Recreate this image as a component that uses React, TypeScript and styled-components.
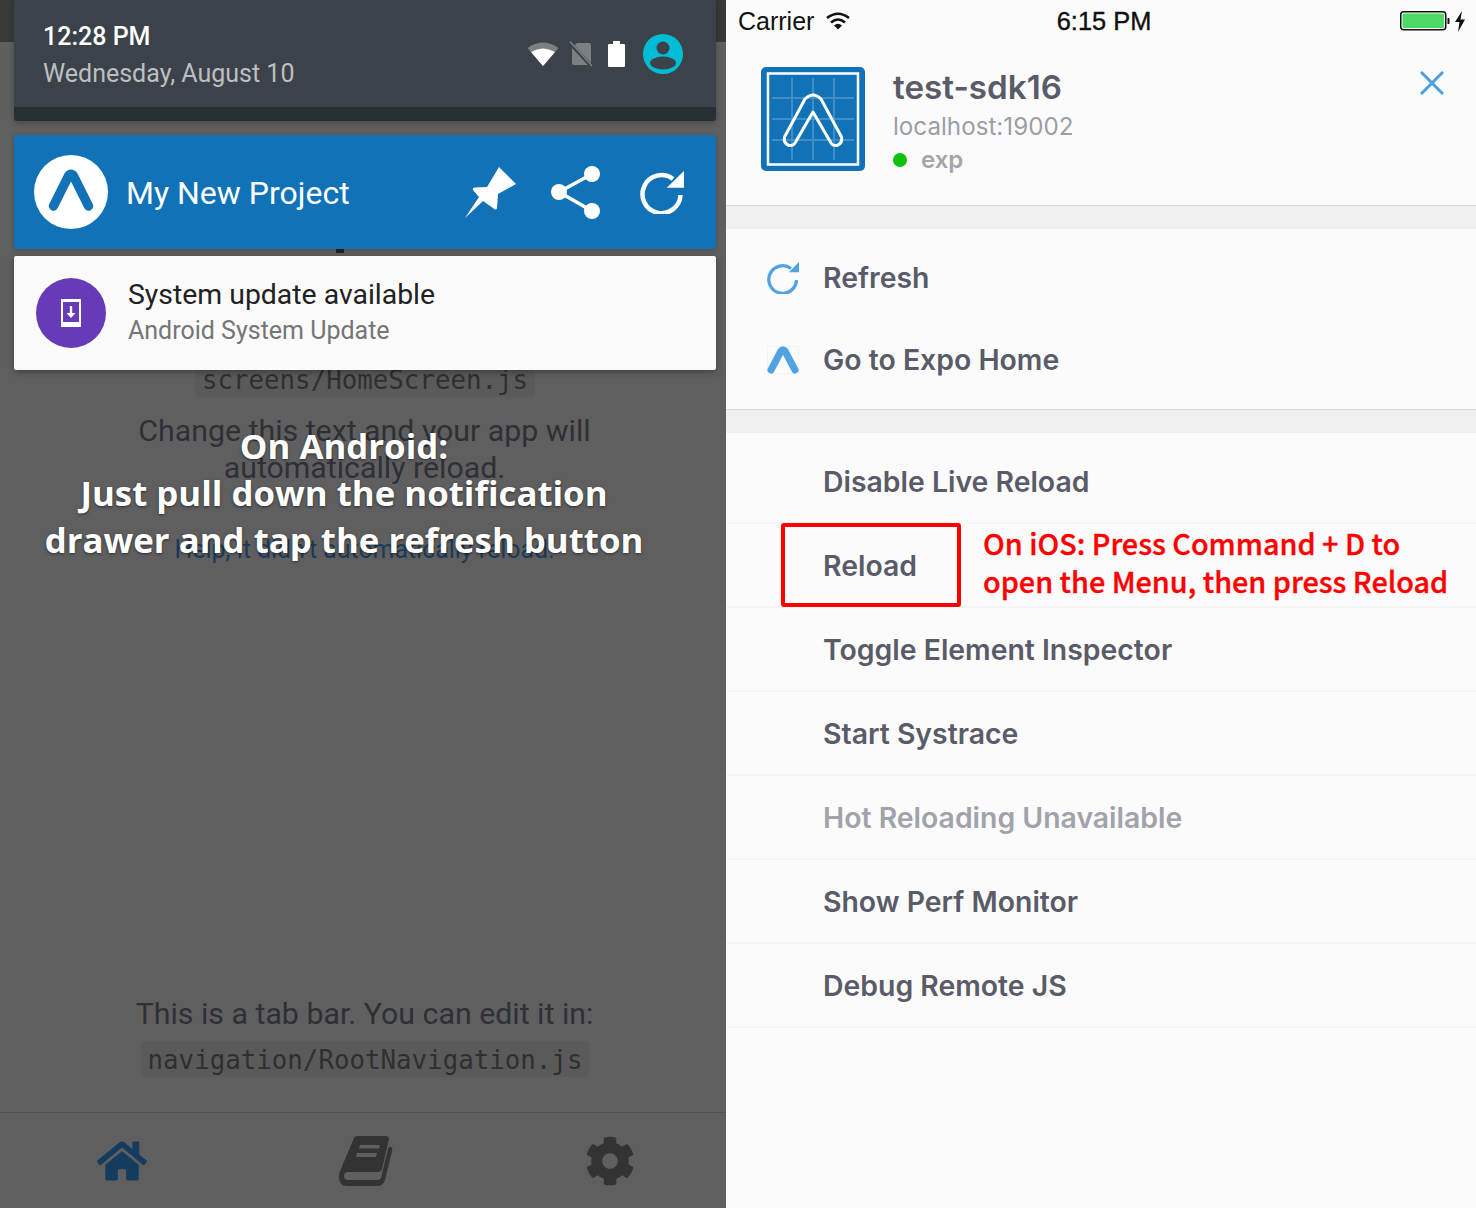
import styled, { createGlobalStyle } from "styled-components";
import { FaCog, FaHome } from "react-icons/fa";

const GlobalStyle = createGlobalStyle`
  html, body {
    margin: 0;
    padding: 0;
    background: #fbfbfb;
  }
  * {
    box-sizing: border-box;
  }
`;

const Page = styled.div`
  display: flex;
  width: 1476px;
  height: 1208px;
  overflow: hidden;
`;

const AndroidPane = styled.div`
  position: relative;
  width: 726px;
  height: 1208px;
  flex-shrink: 0;
  overflow: hidden;
  background: #5f5f5f;
  font-family: Roboto, sans-serif;
`;

const DimApp = styled.div`
  display: flex;
  flex-direction: column;
  align-items: center;
  height: 100%;
`;

const DimStatus = styled.div`
  align-self: stretch;
  height: 42px;
  background: #393939;
`;

const PeekMark = styled.div`
  width: 8px;
  height: 5px;
  margin: 206px 0 0 -46px;
  background: #222;
`;

const CodeChip = styled.div<{ $top: number }>`
  margin-top: ${(p) => p.$top}px;
  margin-left: 4px;
  padding: 1px 7px 0;
  height: 36px;
  line-height: 36px;
  border-radius: 4px;
  background: #5a5a5a;
  color: #2f2f2f;
  font-family: "DejaVu Sans Mono", monospace;
  font-size: 25.8px;
`;

const DimCopy = styled.div<{ $top: number }>`
  margin-top: ${(p) => p.$top}px;
  margin-left: 3px;
  color: #2e3036;
  font-size: 30.3px;
  line-height: 37px;
  text-align: center;
  white-space: nowrap;
`;

const DimLink = styled.div`
  margin-top: 48px;
  margin-left: 3px;
  color: #1c3a56;
  font-size: 24.9px;
  line-height: 32px;
  white-space: nowrap;
`;

const Spacer = styled.div`
  flex: 1;
`;

const TabBar = styled.div`
  align-self: flex-start;
  display: flex;
  align-items: center;
  width: 732px;
  height: 96px;
  margin-top: 35px;
  border-top: 1px solid #525252;
`;

const TabSlot = styled.div<{ $active?: boolean }>`
  flex: 1;
  display: flex;
  justify-content: center;
  color: ${(p) => (p.$active ? "#133c5e" : "#333333")};
  font-size: 50px;
`;

const DrawerStack = styled.div`
  position: absolute;
  top: 0;
  left: 14px;
  width: 702px;
  display: flex;
  flex-direction: column;
`;

const Shade = styled.div`
  height: 121px;
  border-radius: 0 0 3px 3px;
  background: #263035;
  box-shadow: 0 2px 6px rgba(0, 0, 0, 0.25);
`;

const ShadeTop = styled.div`
  display: flex;
  align-items: center;
  justify-content: space-between;
  height: 107px;
  padding: 0 33px 0 29px;
  background: #3c4249;
`;

const ClockBlock = styled.div`
  display: flex;
  flex-direction: column;
  gap: 7px;
  padding-top: 3px;
`;

const ClockTime = styled.div`
  color: #ffffff;
  font-size: 25px;
  font-weight: 500;
  line-height: 30px;
`;

const ClockDate = styled.div`
  color: #bcbfc2;
  font-size: 25px;
  line-height: 30px;
`;

const StatusIcons = styled.div`
  display: flex;
  align-items: center;
  gap: 11px;
  padding-top: 1px;
`;

const BlueCard = styled.div`
  display: flex;
  align-items: center;
  height: 114px;
  margin-top: 14px;
  padding: 0 32px 0 20px;
  border-radius: 2px;
  background: #1172b8;
  color: #ffffff;
  box-shadow: 0 1px 4px rgba(0, 0, 0, 0.2);
`;

const CardTitle = styled.div`
  flex: 1;
  margin: 2px 0 0 18px;
  font-size: 32px;
`;

const CardActions = styled.div`
  display: flex;
  align-items: center;
  gap: 34px;
`;

const UpdateCard = styled.div`
  display: flex;
  align-items: center;
  height: 114px;
  margin-top: 7px;
  padding-left: 22px;
  border-radius: 2px;
  background: #fafafa;
  box-shadow: 0 2px 6px rgba(0, 0, 0, 0.35);
`;

const UpdateBadge = styled.div`
  display: flex;
  align-items: center;
  justify-content: center;
  width: 70px;
  height: 70px;
  border-radius: 50%;
  background: #673ab7;
`;

const UpdateText = styled.div`
  display: flex;
  flex-direction: column;
  gap: 4px;
  margin: -2px 0 0 22px;
`;

const UpdateTitle = styled.div`
  color: #212121;
  font-size: 28.4px;
  line-height: 34px;
`;

const UpdateSub = styled.div`
  color: #757575;
  font-size: 25px;
  line-height: 30px;
`;

const AndroidCaption = styled.div`
  position: absolute;
  top: 422px;
  left: 0;
  width: 688px;
  color: #ffffff;
  font-family: "Open Sans", sans-serif;
  font-size: 34.8px;
  font-weight: 700;
  line-height: 47px;
  text-align: center;
  white-space: nowrap;
  text-shadow: 0 1px 3px rgba(0, 0, 0, 0.55);
`;

const IosPane = styled.div`
  position: relative;
  width: 750px;
  height: 1208px;
  flex-shrink: 0;
  display: flex;
  flex-direction: column;
  background: #fbfbfb;
  font-family: Inter, sans-serif;
  color: #595c68;
`;

const GhostLayer = styled.div`
  position: absolute;
  inset: 0;
  display: flex;
  flex-direction: column;
  align-items: center;
  color: rgba(0, 0, 0, 0.022);
  font-family: Roboto, sans-serif;
  font-size: 36px;
  line-height: 45px;
  white-space: nowrap;
  pointer-events: none;
`;

const GhostLine = styled.div<{ $top: number; $mono?: boolean }>`
  margin-top: ${(p) => p.$top}px;
  font-family: ${(p) => (p.$mono ? '"DejaVu Sans Mono", monospace' : "inherit")};
  font-size: ${(p) => (p.$mono ? "29px" : "36px")};
`;

const IosStatus = styled.div`
  position: relative;
  display: flex;
  align-items: center;
  height: 42px;
  padding: 0 8px 0 12px;
  color: #111111;
  font-size: 25px;
`;

const Carrier = styled.span`
  font-family: "Liberation Sans", sans-serif;
  margin-right: 12px;
`;

const IosClock = styled.span`
  position: absolute;
  left: 6px;
  right: 0;
  text-align: center;
  font-family: "Liberation Sans", sans-serif;
  font-size: 25.4px;
  -webkit-text-stroke: 0.4px #111;
`;

const BatteryWrap = styled.div`
  margin-left: auto;
  display: flex;
  align-items: center;
`;

const ProjectHeader = styled.div`
  position: relative;
  display: flex;
  height: 163px;
  padding: 25px 0 0 35px;
`;

const ProjectInfo = styled.div`
  display: flex;
  flex-direction: column;
  margin-left: 28px;
`;

const ProjectName = styled.div`
  font-size: 33.2px;
  font-weight: 600;
  line-height: 40px;
`;

const ProjectHost = styled.div`
  margin-top: 5px;
  color: #9c9ea6;
  font-size: 24.2px;
  line-height: 30px;
`;

const SdkRow = styled.div`
  display: flex;
  align-items: center;
  margin-top: 3px;
  color: #a3a5ab;
  font-size: 24px;
  font-weight: 600;
  line-height: 30px;
`;

const SdkDot = styled.span`
  width: 14px;
  height: 14px;
  margin-right: 14px;
  border-radius: 50%;
  background: #0cc10c;
`;

const CloseButton = styled.div`
  margin-left: auto;
  margin-right: 32px;
  margin-top: 4px;
  height: 26px;
`;

const SectionGap = styled.div`
  height: 24px;
  border-top: 1px solid #d9d9d9;
  background: #f0f0f0;
`;

const IconSection = styled.div`
  display: flex;
  flex-direction: column;
  height: 180px;
  padding-top: 7px;
`;

const IconRow = styled.div`
  display: flex;
  align-items: center;
  height: 82px;
`;

const IconCell = styled.div`
  display: flex;
  justify-content: center;
  width: 97px;
  padding-left: 17px;
  padding-top: 1px;
`;

const MenuLabel = styled.span<{ $disabled?: boolean }>`
  color: ${(p) => (p.$disabled ? "#a0a3aa" : "#595c68")};
  font-size: 28.4px;
  font-weight: 600;
  white-space: nowrap;
`;

const MenuList = styled.div`
  display: flex;
  flex-direction: column;
  padding-top: 7px;
`;

const MenuRow = styled.div`
  display: flex;
  align-items: center;
  height: 84px;
  padding: 1px 0 0 97px;
  border-bottom: 2px solid #f5f5f5;
`;

const ReloadCallout = styled.div`
  position: absolute;
  top: 523px;
  left: 55px;
  display: flex;
  align-items: center;
`;

const RedBox = styled.div`
  width: 180px;
  height: 84px;
  border: 4px solid #ff0000;
  border-radius: 3px;
`;

const RedNote = styled.div`
  margin-left: 22px;
  padding-bottom: 7px;
  color: #ff0000;
  font-family: "Noto Sans CJK SC", sans-serif;
  font-size: 28.8px;
  font-weight: 500;
  line-height: 38px;
  white-space: nowrap;
  -webkit-text-stroke: 0.35px #ff0000;
`;

const ExpoMark = () => (
  <svg width="32" height="28" viewBox="0 0 32 28" fill="none">
    <rect x="0.5" y="0.5" width="31" height="27" stroke="#f3f3f3" />
    <path
      d="M4 24 L14 5 Q16 2.5 18 5 L28 24"
      stroke="#4fa3e3"
      strokeWidth="7"
      strokeLinecap="round"
      strokeLinejoin="round"
    />
  </svg>
);

const ExpoBadge = () => (
  <svg width="74" height="74" viewBox="0 0 74 74">
    <circle cx="37" cy="37" r="37" fill="#fff" />
    <path
      d="M19.5 51 L34.5 21 Q37 17.5 39.5 21 L54.5 51"
      fill="none"
      stroke="#1172b8"
      strokeWidth="9.5"
      strokeLinecap="round"
      strokeLinejoin="round"
    />
  </svg>
);

const ProjectLogo = () => (
  <svg width="104" height="104" viewBox="0 0 104 104">
    <rect width="104" height="104" rx="5" fill="#1172b8" />
    <rect x="7" y="6.5" width="90" height="91" fill="none" stroke="#fff" strokeWidth="2.5" />
    <g stroke="#fff" strokeOpacity="0.2" strokeWidth="2">
      <path d="M31 11V93M52 11V93M73 11V93M11 31H93M11 52H93M11 73H93" />
    </g>
    <path
      d="M23.5 70 L44 32 Q52 24 60 32 L80.5 70 Q82 76 76 78.5 Q72 79 70 76 L52 45 L34 76 Q32 79 28 78.5 Q22 76 23.5 70 Z"
      fill="none"
      stroke="#fff"
      strokeWidth="3"
      strokeLinejoin="round"
    />
  </svg>
);

const WifiGlyph = () => (
  <svg width="32" height="26" viewBox="0 0 32 26">
    <path d="M16 25 L0.5 7 Q16 -4 31.5 7 Z" fill="#7c8085" />
    <path d="M16 25 L4 11 Q16 4 28 11 Z" fill="#fff" />
  </svg>
);

const NoSimGlyph = () => (
  <svg width="27" height="26" viewBox="0 0 27 26">
    <path d="M7 2 H19 Q21 2 21 4 V22 Q21 24 19 24 H4 Q2 24 2 22 V7 Z" fill="#7c8085" />
    <path d="M0 2 L22 26" stroke="#3c4249" strokeWidth="3.6" />
    <path d="M0 0.5 L22 25" stroke="#7c8085" strokeWidth="1.4" />
  </svg>
);

const BatteryGlyph = () => (
  <svg width="24" height="26" viewBox="0 0 24 26">
    <path d="M5 0 H12 V3 H16 Q17 3 17 4 V25 Q17 26 16 26 H1 Q0 26 0 25 V4 Q0 3 1 3 H5 Z" fill="#fff" />
  </svg>
);

const AvatarGlyph = () => (
  <svg width="40" height="40" viewBox="0 0 40 40">
    <circle cx="20" cy="20" r="20" fill="#00bcd4" />
    <circle cx="20" cy="14" r="6.5" fill="#3c4249" />
    <ellipse cx="20" cy="29" rx="13" ry="6.5" fill="#3c4249" />
  </svg>
);

const PinGlyph = () => (
  <svg width="52" height="53" viewBox="0 0 52 53" fill="#fff">
    <path d="M0 52 L14 31 L8 24 Q7 22 10 21.5 L22 21 L34 1 L51 18 L33 28 L32 42 Q31 45 28 42 L18 35 Z" />
  </svg>
);

const ShareGlyph = () => (
  <svg width="55" height="53" viewBox="0 0 55 53" fill="#fff">
    <circle cx="41" cy="8" r="8" />
    <circle cx="8" cy="26" r="8" />
    <circle cx="41" cy="45" r="8" />
    <path d="M41 8 L8 26 L41 45" fill="none" stroke="#fff" strokeWidth="3.5" />
  </svg>
);

const ReloadGlyph = ({
  size,
  color,
  arrow,
}: {
  size: number;
  color: string;
  arrow: string;
}) => (
  <svg width={size} height={size} viewBox="0 0 44 44" fill="none">
    <path d="M33 9 A19 19 0 1 0 40.5 25" stroke={color} strokeWidth="4.5" />
    <path d={arrow} fill={color} />
  </svg>
);

const PhoneGlyph = () => (
  <svg width="20" height="28" viewBox="0 0 20 28" fill="#fff">
    <path d="M0 0 H20 V28 H0 Z M2 3 V23 H18 V3 Z" fillRule="evenodd" />
    <path d="M8.8 7 H11.2 V14 H14.5 L10 19 L5.5 14 H8.8 Z" />
  </svg>
);

const BookGlyph = () => (
  <svg width="54" height="50" viewBox="0 0 54 50">
    <path
      d="M15 2 Q16 0 19 0 H47 Q50 0 50 3 L43 33 Q42 36 39 36 H9 Q5 36 5 40 Q5 44 9 44 H38 Q41 44 42 42 L49 13 Q50 10 52 11 Q54 12 53 15 L46 44 Q44 50 38 50 H8 Q0 50 0 41 Q0 38 1 35 Z"
      fill="currentColor"
    />
    <path d="M21 9 H41 L40 12.5 H20 Z M18 17 H38 L37 21 H17 Z" fill="#5f5f5f" />
  </svg>
);

const WifiSmall = () => (
  <svg width="24" height="18" viewBox="0 0 24 18" fill="none" stroke="#111" strokeWidth="2.6">
    <path d="M1 6 Q12 -2.5 23 6" />
    <path d="M5 10.5 Q12 4.5 19 10.5" />
    <path d="M12 17.5 L8 13.5 Q12 10 16 13.5 Z" fill="#111" stroke="none" />
  </svg>
);

const BatteryIos = () => (
  <svg width="68" height="24" viewBox="0 0 68 24">
    <rect x="0.75" y="2.75" width="45" height="18" rx="3" fill="none" stroke="#111" strokeWidth="1.5" />
    <rect x="2.5" y="4.5" width="41.5" height="14.5" rx="1.5" fill="#4cd964" />
    <path d="M47.5 9 H49 Q49.5 9 49.5 10 V14 Q49.5 15 49 15 H47.5 Z" fill="#111" />
    <path d="M62 2 L55 13 H59.5 L58 23 L65 10.5 H60.5 Z" fill="#111" />
  </svg>
);

const CloseGlyph = () => (
  <svg width="24" height="24" viewBox="0 0 24 24" stroke="#4a9fe0" strokeWidth="3">
    <path d="M1 1 L23 23 M23 1 L1 23" />
  </svg>
);

const menuItems: { label: string; disabled?: boolean }[] = [
  { label: "Disable Live Reload" },
  { label: "Reload" },
  { label: "Toggle Element Inspector" },
  { label: "Start Systrace" },
  { label: "Hot Reloading Unavailable", disabled: true },
  { label: "Show Perf Monitor" },
  { label: "Debug Remote JS" },
];

export default function App() {
  return (
    <Page>
      <GlobalStyle />
      <AndroidPane>
        <DimApp>
          <DimStatus />
          <PeekMark />
          <CodeChip $top={108}>screens/HomeScreen.js</CodeChip>
          <DimCopy $top={15}>
            Change this text and your app will
            <br />
            automatically reload.
          </DimCopy>
          <DimLink>Help, it didn’t automatically reload!</DimLink>
          <Spacer />
          <DimCopy $top={0}>This is a tab bar. You can edit it in:</DimCopy>
          <CodeChip $top={9}>navigation/RootNavigation.js</CodeChip>
          <TabBar>
            <TabSlot $active>
              <FaHome />
            </TabSlot>
            <TabSlot>
              <BookGlyph />
            </TabSlot>
            <TabSlot>
              <FaCog />
            </TabSlot>
          </TabBar>
        </DimApp>

        <DrawerStack>
          <Shade>
            <ShadeTop>
              <ClockBlock>
                <ClockTime>12:28 PM</ClockTime>
                <ClockDate>Wednesday, August 10</ClockDate>
              </ClockBlock>
              <StatusIcons>
                <WifiGlyph />
                <NoSimGlyph />
                <BatteryGlyph />
                <AvatarGlyph />
              </StatusIcons>
            </ShadeTop>
          </Shade>
          <BlueCard>
            <ExpoBadge />
            <CardTitle>My New Project</CardTitle>
            <CardActions>
              <PinGlyph />
              <ShareGlyph />
              <ReloadGlyph size={44} color="#fff" arrow="M44 1 V17.7 H26.7 Z" />
            </CardActions>
          </BlueCard>
          <UpdateCard>
            <UpdateBadge>
              <PhoneGlyph />
            </UpdateBadge>
            <UpdateText>
              <UpdateTitle>System update available</UpdateTitle>
              <UpdateSub>Android System Update</UpdateSub>
            </UpdateText>
          </UpdateCard>
        </DrawerStack>

        <AndroidCaption>
          On Android:
          <br />
          Just pull down the notification
          <br />
          drawer and tap the refresh button
        </AndroidCaption>
      </AndroidPane>

      <IosPane>
        <GhostLayer>
          <GhostLine $top={489}>Get started by opening</GhostLine>
          <GhostLine $top={11} $mono>
            screens/HomeScreen.js
          </GhostLine>
          <GhostLine $top={17}>Change this text and your app will</GhostLine>
          <GhostLine $top={0}>automatically reload!</GhostLine>
          <GhostLine $top={0}>ASDLKJFHHELLLP</GhostLine>
          <GhostLine $top={55}>Help, it didn’t automatically reload!</GhostLine>
          <GhostLine $top={247}>This is a tab bar. You can edit it in:</GhostLine>
          <GhostLine $top={8} $mono>
            navigation/RootNavigation.js
          </GhostLine>
        </GhostLayer>

        <IosStatus>
          <Carrier>Carrier</Carrier>
          <WifiSmall />
          <IosClock>6:15 PM</IosClock>
          <BatteryWrap>
            <BatteryIos />
          </BatteryWrap>
        </IosStatus>

        <ProjectHeader>
          <ProjectLogo />
          <ProjectInfo>
            <ProjectName>test-sdk16</ProjectName>
            <ProjectHost>localhost:19002</ProjectHost>
            <SdkRow>
              <SdkDot />
              exp
            </SdkRow>
          </ProjectInfo>
          <CloseButton>
            <CloseGlyph />
          </CloseButton>
        </ProjectHeader>

        <SectionGap />
        <IconSection>
          <IconRow>
            <IconCell>
              <ReloadGlyph size={32} color="#4fa3e3" arrow="M44 0 V14 H30 Z" />
            </IconCell>
            <MenuLabel>Refresh</MenuLabel>
          </IconRow>
          <IconRow>
            <IconCell>
              <ExpoMark />
            </IconCell>
            <MenuLabel>Go to Expo Home</MenuLabel>
          </IconRow>
        </IconSection>
        <SectionGap />

        <MenuList>
          {menuItems.map((item) => (
            <MenuRow key={item.label}>
              <MenuLabel $disabled={item.disabled}>{item.label}</MenuLabel>
            </MenuRow>
          ))}
        </MenuList>

        <ReloadCallout>
          <RedBox />
          <RedNote>
            On iOS: Press Command + D to
            <br />
            open the Menu, then press Reload
          </RedNote>
        </ReloadCallout>
      </IosPane>
    </Page>
  );
}
